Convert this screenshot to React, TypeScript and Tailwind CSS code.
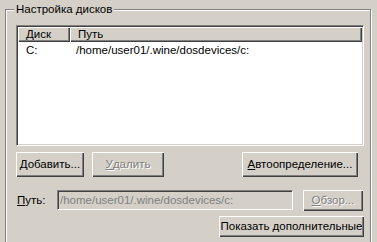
import React from 'react';

const raised =
  'bg-[#d4d0c8] shadow-[inset_1px_1px_0_#fff,inset_-1px_-1px_0_#404040,inset_-2px_-2px_0_#808080]';
const sunken =
  'border border-t-[#808080] border-l-[#808080] border-b-white border-r-white shadow-[inset_1px_1px_0_#404040,inset_-1px_-1px_0_#d4d0c8]';
const disabledText = 'text-[#808080] [text-shadow:1px_1px_0_#fff]';

const Button: React.FC<{
  className?: string;
  disabled?: boolean;
  children: React.ReactNode;
}> = ({ className = '', disabled, children }) => (
  <button
    type="button"
    className={`flex items-center justify-center whitespace-nowrap ${raised} ${
      disabled ? disabledText : 'text-black'
    } ${className}`}
  >
    {children}
  </button>
);

export default function App() {
  return (
    <div className="w-[377px] h-[242px] overflow-hidden bg-[#d4d0c8] pt-[9px] pl-[5px] font-['Liberation_Sans',Arial,sans-serif] text-[11.5px] leading-[13px] text-black">
      {/* group box */}
      <div className="relative w-[366px] h-[260px] border border-[#808080] shadow-[inset_1px_1px_0_#fff,1px_1px_0_#fff] pt-[15px] pl-[10px]">
        <span className="absolute -top-[8px] left-[8px] bg-[#d4d0c8] px-[2px] leading-[14px]">
          Настройка дисков
        </span>

        {/* drive list */}
        <div className={`w-[348px] h-[121px] bg-white ${sunken} p-[1px]`}>
          <div className="flex h-[15px]">
            <div className={`w-[52px] h-full pl-[8px] flex items-center ${raised}`}>Диск</div>
            <div className={`flex-1 h-full pl-[8px] flex items-center ${raised}`}>Путь</div>
          </div>
          <div className="flex h-[15px] items-center mt-[1px]">
            <div className="w-[52px] pl-[8px]">C:</div>
            <div className="flex-1 pl-[6px]">/home/user01/.wine/dosdevices/c:</div>
          </div>
        </div>

        {/* buttons */}
        <div className="flex mt-[6px] w-[348px]">
          <Button className="w-[68px] h-[25px]">
            <u>Д</u>обавить...
          </Button>
          <Button disabled className="w-[72px] h-[25px] ml-[8px]">
            <u>У</u>далить
          </Button>
          <Button className="w-[116px] h-[25px] ml-auto mr-[6px]">
            <u>А</u>втоопределение...
          </Button>
        </div>

        {/* path row */}
        <div className="flex items-start mt-[13px]">
          <div className="w-[41px] h-[20px] pl-[1px] flex items-center">
            <u>П</u>уть:
          </div>
          <div
            className={`w-[236px] h-[20px] ${sunken} bg-[#d4d0c8] text-[#808080] pl-[2px] flex items-center whitespace-nowrap overflow-hidden`}
          >
            /home/user01/.wine/dosdevices/c:
          </div>
          <Button disabled className="w-[60px] h-[21px] ml-[10px]">
            <u>О</u>бзор...
          </Button>
        </div>

        <div className="flex mt-[5px]">
          <Button className="w-[145px] h-[21px] ml-[203px]">Показать дополнительные</Button>
        </div>
      </div>
    </div>
  );
}
